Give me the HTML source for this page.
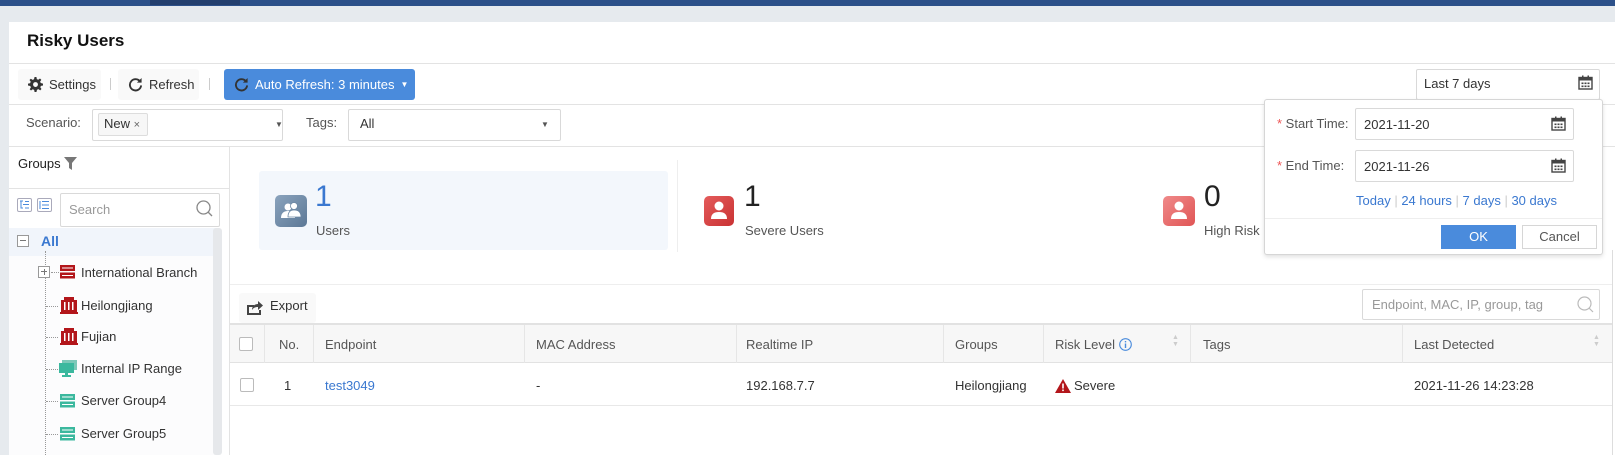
<!DOCTYPE html>
<html><head><meta charset="utf-8"><style>
*{box-sizing:border-box;margin:0;padding:0}
body{width:1615px;height:455px;overflow:hidden;background:#e6eaee;font-family:"Liberation Sans","Noto Sans CJK SC",sans-serif;font-size:13px;color:#333;position:relative}
.a{position:absolute}
.hl{position:absolute;height:1px;background:#e3e3e3}
.vl{position:absolute;width:1px;background:#e3e3e3}
.btn{position:absolute;display:flex;align-items:center;gap:6px;padding-left:10px;background:#f9f9f9;border-radius:3px}
.box{position:absolute;border:1px solid #d9d9d9;background:#fff;border-radius:2px}
.t{position:absolute;white-space:nowrap;line-height:16px}
.cal{position:absolute;width:15px;height:15px}
.tree{position:absolute;left:79px;white-space:nowrap}
.th{position:absolute;color:#555;white-space:nowrap}
.cb{position:absolute;width:14px;height:14px;border:1px solid #bbb;border-radius:2px;background:#fff}
a{color:#3a78d0;text-decoration:none}
</style></head><body>
<div class="a" style="left:0;top:0;width:1615px;height:6px;background:#2c5089"></div>
<div class="a" style="left:150px;top:0;width:90px;height:5px;background:#233f6e"></div>
<div class="a" style="left:9px;top:22px;width:1606px;height:433px;background:#fff"></div>
<div class="t" style="left:27px;top:32px;font-size:17px;font-weight:bold;color:#111;line-height:18px">Risky Users</div>
<div class="hl" style="left:9px;top:63px;width:1606px"></div>
<div class="btn" style="left:18px;top:69px;width:83px;height:31px"><svg width="15" height="15" viewBox="0 0 16 16"><path fill="#333" d="M7 0h2l.4 2.2 1.5.7 1.9-1.3 1.4 1.4-1.3 1.9.7 1.5L16 7v2l-2.2.4-.7 1.5 1.3 1.9-1.4 1.4-1.9-1.3-1.5.7L9 16H7l-.4-2.2-1.5-.7-1.9 1.3-1.4-1.4 1.3-1.9-.7-1.5L0 9V7l2.2-.4.7-1.5L1.6 3.2 3 1.8l1.9 1.3 1.5-.7z"/><circle cx="8" cy="8" r="2.6" fill="#f9f9f9"/></svg>Settings</div>
<div class="vl" style="left:110px;top:78px;height:12px;background:#ccc"></div>
<div class="btn" style="left:118px;top:69px;width:81px;height:31px"><svg width="15" height="15" viewBox="0 0 16 16"><path d="M13 5A6 6 0 1 0 14 9" fill="none" stroke="#333" stroke-width="2"/><path d="M14.5 1v5h-5z" fill="#333"/></svg>Refresh</div>
<div class="vl" style="left:209px;top:78px;height:12px;background:#ccc"></div>
<div class="a" style="left:224px;top:69px;width:191px;height:31px;background:#4a8bdc;border-radius:3px;color:#fff;display:flex;align-items:center;padding-left:10px;gap:6px"><svg width="15" height="15" viewBox="0 0 16 16"><path d="M13 5A6 6 0 1 0 14 9" fill="none" stroke="#333" stroke-width="2"/><path d="M14.5 1v5h-5z" fill="#333"/></svg>Auto Refresh: 3 minutes <span style="font-size:8px">▼</span></div>
<div class="box" style="left:1416px;top:69px;width:184px;height:31px"></div>
<div class="t" style="left:1424px;top:76px">Last 7 days</div>
<svg class="cal" style="left:1578px;top:75px" viewBox="0 0 15 15"><rect x="1" y="2.5" width="13" height="11.5" fill="none" stroke="#444" stroke-width="1.4"/><rect x="1" y="2.5" width="13" height="3" fill="#444"/><rect x="4" y="0.5" width="1.5" height="3" fill="#444"/><rect x="9.5" y="0.5" width="1.5" height="3" fill="#444"/><g fill="#444"><rect x="3.5" y="7.5" width="2" height="1.6"/><rect x="6.5" y="7.5" width="2" height="1.6"/><rect x="9.5" y="7.5" width="2" height="1.6"/><rect x="3.5" y="10.5" width="2" height="1.6"/><rect x="6.5" y="10.5" width="2" height="1.6"/><rect x="9.5" y="10.5" width="2" height="1.6"/></g></svg>
<div class="hl" style="left:9px;top:104px;width:1606px"></div>
<div class="t" style="left:26px;top:115px;color:#555">Scenario:</div>
<div class="box" style="left:92px;top:109px;width:191px;height:32px"></div>
<div class="a" style="left:98px;top:113px;width:50px;height:23px;border:1px solid #ddd;background:#f7f7f7;border-radius:2px"></div>
<div class="t" style="left:104px;top:116px">New <span style="font-size:11px;color:#666">×</span></div>
<div class="t" style="left:275px;top:117px;font-size:8px;color:#555">▼</div>
<div class="t" style="left:306px;top:115px;color:#555">Tags:</div>
<div class="box" style="left:348px;top:109px;width:213px;height:32px"></div>
<div class="t" style="left:360px;top:116px">All</div>
<div class="t" style="left:541px;top:117px;font-size:8px;color:#555">▼</div>
<div class="hl" style="left:9px;top:146px;width:1606px"></div>
<!-- left panel -->
<div class="vl" style="left:229px;top:146px;height:309px"></div>
<div class="t" style="left:18px;top:156px;color:#222">Groups <svg width="13" height="13" viewBox="0 0 13 13" style="vertical-align:-2px"><path d="M0 0h13L8 6v7L5 11V6z" fill="#777"/></svg></div>
<div class="hl" style="left:9px;top:188px;width:220px"></div>
<div class="a" style="left:17px;top:198px;width:15px;height:14px;border:1px solid #aab;border-radius:2px"></div>
<div class="a" style="left:37px;top:198px;width:15px;height:14px;border:1px solid #aab;border-radius:2px"></div>
<svg class="a" style="left:19px;top:200px" width="11" height="10" viewBox="0 0 11 10"><path d="M1 1h3M2 1v7h2M4 4.5h6M6 8h4M6 1.5h4" stroke="#4a8bdc" stroke-width="1" fill="none"/></svg>
<svg class="a" style="left:39px;top:200px" width="11" height="10" viewBox="0 0 11 10"><path d="M1 1v8M3 1.5h7M3 5h7M3 8.5h7" stroke="#4a8bdc" stroke-width="1" fill="none"/></svg>
<div class="box" style="left:60px;top:193px;width:160px;height:34px"></div>
<div class="t" style="left:69px;top:202px;color:#999">Search</div>
<svg class="a" style="left:196px;top:200px" width="17" height="17" viewBox="0 0 17 17"><circle cx="7.5" cy="7.5" r="6.5" fill="none" stroke="#888" stroke-width="1.3"/><path d="M12 12l4 4" stroke="#888" stroke-width="1.3"/></svg>
<div class="a" style="left:9px;top:228px;width:211px;height:28px;background:#f1f5fb"></div>
<div class="a" style="left:9px;top:256px;width:211px;height:199px;background:#fcfcfd"></div>
<div class="a" style="left:213px;top:228px;width:9px;height:227px;background:#e6e8eb;border-radius:3px"></div>
<div class="a" style="left:17px;top:235px;width:12px;height:12px;border:1px solid #999;background:#fff"></div>
<div class="a" style="left:20px;top:240px;width:6px;height:1px;background:#777"></div>
<div class="t" style="left:41px;top:233px;font-weight:bold;color:#3a78d0;font-size:14px">All</div>
<div class="a" style="left:45px;top:251px;height:204px;border-left:1px dotted #999"></div>
<div class="a" style="left:38px;top:266px;width:12px;height:12px;border:1px solid #999;background:#fff"></div>
<div class="a" style="left:41px;top:271px;width:6px;height:1px;background:#777"></div>
<div class="a" style="left:43.5px;top:269px;width:1px;height:6px;background:#777"></div>
<div class="a" style="left:51px;top:272px;width:8px;border-top:1px dotted #999"></div>
<svg class="a" style="left:60px;top:264px" width="15" height="15" viewBox="0 0 15 15"><rect x="0" y="1" width="15" height="6" fill="#b3161b"/><rect x="0" y="8.5" width="15" height="6" fill="#b3161b"/><rect x="2" y="3.5" width="11" height="1" fill="#fff"/><rect x="2" y="11" width="11" height="1" fill="#fff"/></svg>
<div class="tree" style="left:81px;top:265px">International Branch</div>
<div class="a" style="left:46px;top:306px;width:12px;border-top:1px dotted #999"></div>
<svg class="a" style="left:60px;top:297px" width="18" height="17" viewBox="0 0 18 17"><rect x="1" y="3" width="16" height="12" fill="#b3161b"/><rect x="4" y="0" width="10" height="4" fill="#b3161b"/><g fill="#fff"><rect x="4" y="5" width="1.5" height="8"/><rect x="8" y="5" width="1.5" height="8"/><rect x="12" y="5" width="1.5" height="8"/></g><rect x="0" y="15" width="18" height="2" fill="#b3161b"/></svg>
<div class="tree" style="left:81px;top:298px">Heilongjiang</div>
<div class="a" style="left:46px;top:337px;width:12px;border-top:1px dotted #999"></div>
<svg class="a" style="left:60px;top:328px" width="18" height="17" viewBox="0 0 18 17"><rect x="1" y="3" width="16" height="12" fill="#b3161b"/><rect x="4" y="0" width="10" height="4" fill="#b3161b"/><g fill="#fff"><rect x="4" y="5" width="1.5" height="8"/><rect x="8" y="5" width="1.5" height="8"/><rect x="12" y="5" width="1.5" height="8"/></g><rect x="0" y="15" width="18" height="2" fill="#b3161b"/></svg>
<div class="tree" style="left:81px;top:329px">Fujian</div>
<div class="a" style="left:46px;top:369px;width:12px;border-top:1px dotted #999"></div>
<svg class="a" style="left:59px;top:360px" width="18" height="17" viewBox="0 0 18 17"><rect x="3" y="0" width="15" height="10" fill="#7cc8b8"/><rect x="0" y="3" width="15" height="10" fill="#3bb89e"/><rect x="6" y="13" width="3" height="2" fill="#3bb89e"/><rect x="3" y="15" width="9" height="2" fill="#3bb89e"/></svg>
<div class="tree" style="left:81px;top:361px">Internal IP Range</div>
<div class="a" style="left:46px;top:401px;width:12px;border-top:1px dotted #999"></div>
<svg class="a" style="left:60px;top:393px" width="15" height="15" viewBox="0 0 15 15"><rect x="0" y="1" width="15" height="6" fill="#3bb89e"/><rect x="0" y="8.5" width="15" height="6" fill="#3bb89e"/><rect x="2" y="3.5" width="11" height="1" fill="#fff"/><rect x="2" y="11" width="11" height="1" fill="#fff"/></svg>
<div class="tree" style="left:81px;top:393px">Server Group4</div>
<div class="a" style="left:46px;top:434px;width:12px;border-top:1px dotted #999"></div>
<svg class="a" style="left:60px;top:426px" width="15" height="15" viewBox="0 0 15 15"><rect x="0" y="1" width="15" height="6" fill="#3bb89e"/><rect x="0" y="8.5" width="15" height="6" fill="#3bb89e"/><rect x="2" y="3.5" width="11" height="1" fill="#fff"/><rect x="2" y="11" width="11" height="1" fill="#fff"/></svg>
<div class="tree" style="left:81px;top:426px">Server Group5</div>
<!-- stats -->
<div class="a" style="left:259px;top:171px;width:409px;height:79px;background:#f3f7fc;border-radius:3px"></div>
<div class="vl" style="left:677px;top:160px;height:92px;background:#eee"></div>
<div class="a" style="left:275px;top:195px;width:32px;height:32px;border-radius:5px;background:linear-gradient(135deg,#8aa3bd,#5c7896)"></div>
<svg class="a" style="left:281px;top:202px" width="20" height="17" viewBox="0 0 20 17"><circle cx="7" cy="5" r="3.5" fill="#fff"/><path d="M0 16c0-5 3-7 7-7s7 2 7 7z" fill="#fff"/><circle cx="13" cy="4" r="3.5" fill="#fff" stroke="#6b86a2" stroke-width="0.8"/><path d="M7 15c0-5 2-7 6-7s7 2 7 7z" fill="#fff" stroke="#6b86a2" stroke-width="0.8"/></svg>
<div class="t" style="left:315px;top:182px;font-size:30px;line-height:30px;color:#3a78d0">1</div>
<div class="t" style="left:316px;top:223px;color:#555">Users</div>
<div class="a" style="left:704px;top:196px;width:30px;height:30px;border-radius:5px;background:linear-gradient(135deg,#e45b5b,#c93233)"></div>
<svg class="a" style="left:711px;top:201px" width="16" height="19" viewBox="0 0 16 19"><circle cx="8" cy="5" r="4.5" fill="#fff"/><path d="M0 18c0-5 3-7 8-7s8 2 8 7z" fill="#fff"/></svg>
<div class="t" style="left:744px;top:182px;font-size:30px;line-height:30px;color:#222">1</div>
<div class="t" style="left:745px;top:223px;color:#555">Severe Users</div>
<div class="a" style="left:1163px;top:196px;width:32px;height:30px;border-radius:5px;background:linear-gradient(135deg,#f08a8a,#e05555)"></div>
<svg class="a" style="left:1171px;top:201px" width="16" height="19" viewBox="0 0 16 19"><circle cx="8" cy="5" r="4.5" fill="#fff"/><path d="M0 18c0-5 3-7 8-7s8 2 8 7z" fill="#fff"/></svg>
<div class="t" style="left:1204px;top:182px;font-size:30px;line-height:30px;color:#222">0</div>
<div class="t" style="left:1204px;top:223px;color:#555">High Risk U</div>
<div class="hl" style="left:230px;top:284px;width:1382px;background:#eee"></div>
<!-- export -->
<div class="a" style="left:239px;top:293px;width:77px;height:30px;background:#f9f9f9;border-radius:3px"></div>
<svg class="a" style="left:247px;top:299px" width="16" height="16" viewBox="0 0 16 16"><path d="M0 6h7v2H2v6h10v-3h2v5H0z" fill="#444"/><path d="M5 11c0-4 3-6 6-6V2l5 4.5-5 4.5V8c-3 0-5 1-6 3z" fill="#444"/></svg>
<div class="t" style="left:270px;top:298px">Export</div>
<div class="box" style="left:1362px;top:289px;width:238px;height:31px"></div>
<div class="t" style="left:1372px;top:297px;color:#999">Endpoint, MAC, IP, group, tag</div>
<svg class="a" style="left:1577px;top:296px" width="17" height="17" viewBox="0 0 17 17"><circle cx="7.5" cy="7.5" r="6.5" fill="none" stroke="#bbb" stroke-width="1.2"/><path d="M12 12l4 4" stroke="#bbb" stroke-width="1.2"/></svg>
<!-- table -->
<div class="a" style="left:230px;top:323px;width:1382px;height:40px;background:#f7f7f7;border-top:2px solid #e2e2e2;border-bottom:1px solid #e2e2e2"></div>
<div class="hl" style="left:230px;top:405px;width:1382px;background:#e8e8e8"></div>
<div class="vl" style="left:1612px;top:250px;height:205px;background:#ddd"></div>
<div class="vl" style="left:264px;top:325px;height:38px;background:#e6e6e6"></div>
<div class="vl" style="left:313px;top:325px;height:38px;background:#e6e6e6"></div>
<div class="vl" style="left:524px;top:325px;height:38px;background:#e6e6e6"></div>
<div class="vl" style="left:736px;top:325px;height:38px;background:#e6e6e6"></div>
<div class="vl" style="left:943px;top:325px;height:38px;background:#e6e6e6"></div>
<div class="vl" style="left:1043px;top:325px;height:38px;background:#e6e6e6"></div>
<div class="vl" style="left:1190px;top:325px;height:38px;background:#e6e6e6"></div>
<div class="vl" style="left:1402px;top:325px;height:38px;background:#e6e6e6"></div>
<div class="cb" style="left:239px;top:337px"></div>
<div class="th" style="left:279px;top:337px">No.</div>
<div class="th" style="left:325px;top:337px">Endpoint</div>
<div class="th" style="left:536px;top:337px">MAC Address</div>
<div class="th" style="left:746px;top:337px">Realtime IP</div>
<div class="th" style="left:955px;top:337px">Groups</div>
<div class="th" style="left:1055px;top:337px">Risk Level <svg width="13" height="13" viewBox="0 0 13 13" style="vertical-align:-2px"><circle cx="6.5" cy="6.5" r="5.8" fill="none" stroke="#4a8bdc" stroke-width="1.1"/><rect x="5.8" y="5.5" width="1.4" height="4.5" fill="#4a8bdc"/><rect x="5.8" y="3" width="1.4" height="1.4" fill="#4a8bdc"/></svg></div>
<div class="th" style="left:1172px;top:334px;font-size:7px;line-height:7px;color:#ccc">▲<br>▼</div>
<div class="th" style="left:1203px;top:337px">Tags</div>
<div class="th" style="left:1414px;top:337px">Last Detected</div>
<div class="th" style="left:1593px;top:334px;font-size:7px;line-height:7px;color:#ccc">▲<br>▼</div>
<div class="cb" style="left:240px;top:378px"></div>
<div class="t" style="left:284px;top:378px">1</div>
<div class="t" style="left:325px;top:378px"><a>test3049</a></div>
<div class="t" style="left:536px;top:378px">-</div>
<div class="t" style="left:746px;top:378px">192.168.7.7</div>
<div class="t" style="left:955px;top:378px">Heilongjiang</div>
<svg class="a" style="left:1055px;top:379px" width="16" height="14" viewBox="0 0 16 14"><path d="M8 0L16 14H0z" fill="#b3161b"/><rect x="7.2" y="4.5" width="1.6" height="5" fill="#fff"/><rect x="7.2" y="10.5" width="1.6" height="1.6" fill="#fff"/></svg>
<div class="t" style="left:1074px;top:378px">Severe</div>
<div class="t" style="left:1414px;top:378px">2021-11-26 14:23:28</div>
<!-- popup -->
<div class="a" style="left:1264px;top:99px;width:339px;height:156px;background:#fff;border:1px solid #d6d6d6;border-radius:3px;box-shadow:0 2px 4px rgba(0,0,0,.12)"></div>
<div class="t" style="left:1277px;top:116px;color:#555"><span style="color:#e55">*</span> Start Time:</div>
<div class="box" style="left:1355px;top:108px;width:219px;height:32px"></div>
<div class="t" style="left:1364px;top:117px">2021-11-20</div>
<svg class="cal" style="left:1551px;top:116px" viewBox="0 0 15 15"><rect x="1" y="2.5" width="13" height="11.5" fill="none" stroke="#444" stroke-width="1.4"/><rect x="1" y="2.5" width="13" height="3" fill="#444"/><rect x="4" y="0.5" width="1.5" height="3" fill="#444"/><rect x="9.5" y="0.5" width="1.5" height="3" fill="#444"/><g fill="#444"><rect x="3.5" y="7.5" width="2" height="1.6"/><rect x="6.5" y="7.5" width="2" height="1.6"/><rect x="9.5" y="7.5" width="2" height="1.6"/><rect x="3.5" y="10.5" width="2" height="1.6"/><rect x="6.5" y="10.5" width="2" height="1.6"/><rect x="9.5" y="10.5" width="2" height="1.6"/></g></svg>
<div class="t" style="left:1277px;top:158px;color:#555"><span style="color:#e55">*</span> End Time:</div>
<div class="box" style="left:1355px;top:150px;width:219px;height:32px"></div>
<div class="t" style="left:1364px;top:159px">2021-11-26</div>
<svg class="cal" style="left:1551px;top:158px" viewBox="0 0 15 15"><rect x="1" y="2.5" width="13" height="11.5" fill="none" stroke="#444" stroke-width="1.4"/><rect x="1" y="2.5" width="13" height="3" fill="#444"/><rect x="4" y="0.5" width="1.5" height="3" fill="#444"/><rect x="9.5" y="0.5" width="1.5" height="3" fill="#444"/><g fill="#444"><rect x="3.5" y="7.5" width="2" height="1.6"/><rect x="6.5" y="7.5" width="2" height="1.6"/><rect x="9.5" y="7.5" width="2" height="1.6"/><rect x="3.5" y="10.5" width="2" height="1.6"/><rect x="6.5" y="10.5" width="2" height="1.6"/><rect x="9.5" y="10.5" width="2" height="1.6"/></g></svg>
<div class="t" style="left:1356px;top:193px;color:#3a78d0">Today <span style="color:#ccc">|</span> 24 hours <span style="color:#ccc">|</span> 7 days <span style="color:#ccc">|</span> 30 days</div>
<div class="hl" style="left:1265px;top:218px;width:337px;background:#eee"></div>
<div class="a" style="left:1441px;top:225px;width:75px;height:24px;background:#4a8bdc;color:#fff;text-align:center;line-height:24px">OK</div>
<div class="a" style="left:1522px;top:225px;width:75px;height:24px;border:1px solid #d6d6d6;color:#555;text-align:center;line-height:22px">Cancel</div>
</body></html>
